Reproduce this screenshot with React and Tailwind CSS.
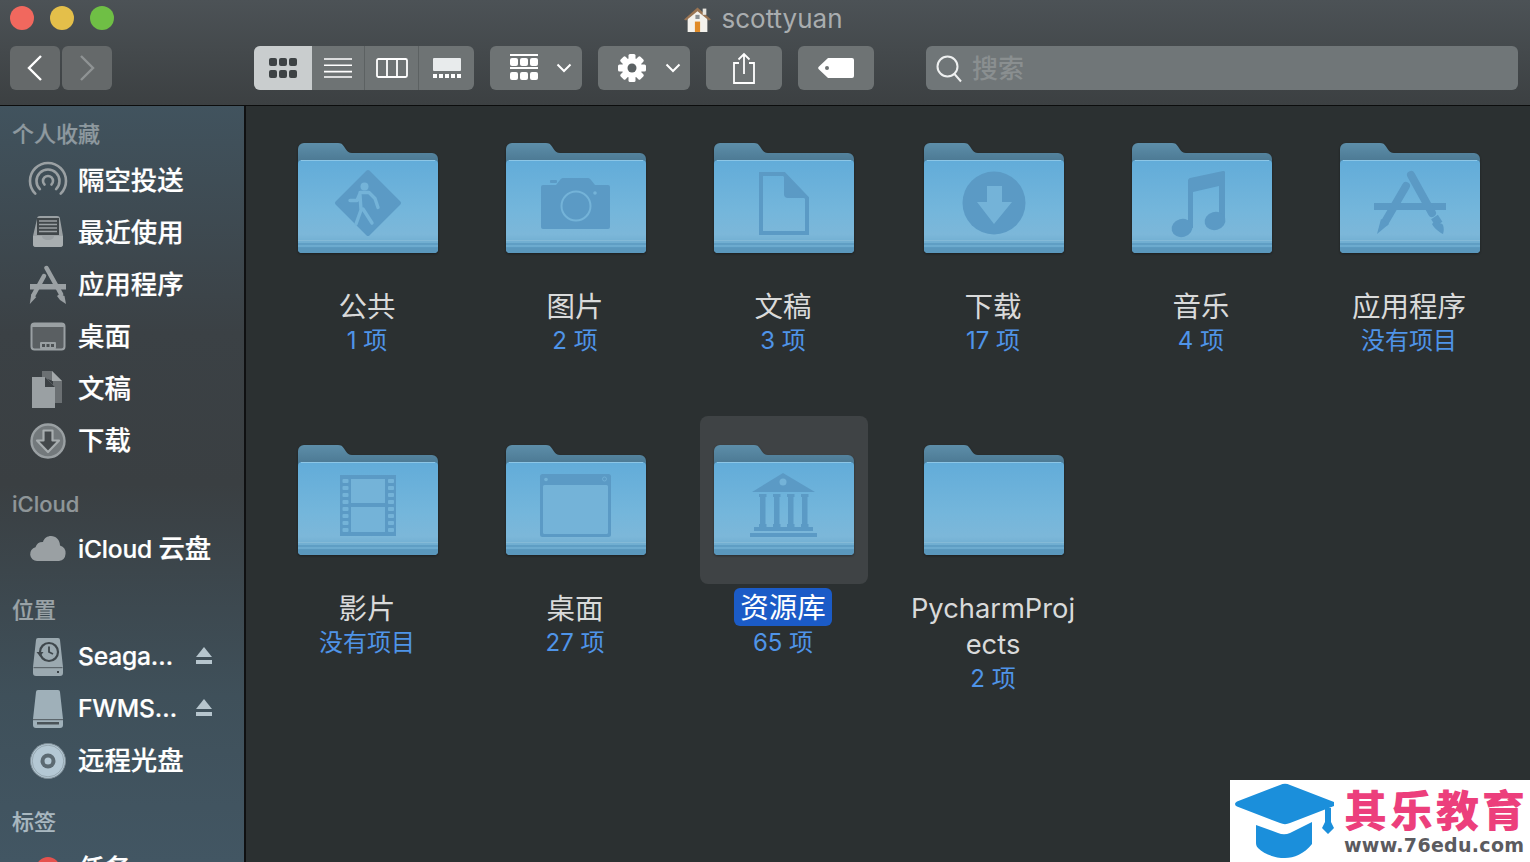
const G = "#5b9ac5";
const L = "#74b3d8";

function Folder({ children }) {
  return (
    <svg width="140" height="112" viewBox="0 0 140 112" className="block drop-shadow-[0_1px_1px_rgba(0,0,0,0.35)]">
      <defs>
        <linearGradient id="fback" x1="0" y1="0" x2="0" y2="1">
          <stop offset="0" stopColor="#5d8ea9" />
          <stop offset="1" stopColor="#436e88" />
        </linearGradient>
        <linearGradient id="ffront" x1="0" y1="0" x2="0" y2="1">
          <stop offset="0" stopColor="#62acd9" />
          <stop offset="0.55" stopColor="#74b6db" />
          <stop offset="0.8" stopColor="#7cb7d9" />
          <stop offset="0.9" stopColor="#6fadd0" />
          <stop offset="1" stopColor="#65a5ca" />
        </linearGradient>
      </defs>
      <path d="M0 6a6 6 0 0 1 6-6h34c3 0 4.500 1 6 3.500l2 3c1.500 2.300 3 3.500 6 3.500h80a6 6 0 0 1 6 6v12H0z" fill="url(#fback)" />
      <path d="M0 21a4 4 0 0 1 4-4h132a4 4 0 0 1 4 4v85a4 4 0 0 1-4 4H4a4 4 0 0 1-4-4z" fill="url(#ffront)" />
      <path d="M3 17.500h134" stroke="#8cc6e6" strokeWidth="1" />
      <rect x="0" y="97" width="140" height="1" fill="#84bad7" />
      <rect x="0" y="100" width="140" height="2" fill="#5f9ec4" />
      <rect x="0" y="104" width="140" height="1" fill="#5b9ac0" />
      <path d="M0 106v0a4 4 0 0 0 4 4h132a4 4 0 0 0 4-4v-1H0z" fill="#5a97bc" />
      {children}
    </svg>
  );
}

const glyphs = {
  public: (
    <g>
      <path d="M70 29 L101 60 L70 91 L39 60 Z" fill={G} stroke={G} strokeWidth="4" strokeLinejoin="round" />
      <circle cx="66.500" cy="43.500" r="4" fill={L} />
      <path d="M62 49.500h9l6 6 3 9M52 57.500h7l3-7M62 52l1 15-5 14M65 66l9 14" fill="none" stroke={L} strokeWidth="3.400" strokeLinecap="round" strokeLinejoin="round" />
    </g>
  ),
  camera: (
    <g>
      <path d="M37 42h13l4-5c1-1.500 2-2 4-2h23c2 0 3 .5 4 2l4 5h13a2 2 0 0 1 2 2v40a2 2 0 0 1-2 2H37a2 2 0 0 1-2-2V44a2 2 0 0 1 2-2z" fill={G} />
      <rect x="44" y="37" width="7" height="3" rx="1" fill={G} />
      <circle cx="70" cy="63" r="14.500" fill="none" stroke={L} strokeWidth="2" />
      <circle cx="89" cy="50" r="1.800" fill={L} />
    </g>
  ),
  doc: (
    <g>
      <path d="M47 31h23l23 24v35H47z" fill="none" stroke={G} strokeWidth="4" />
      <path d="M70 31l23 24H74a4 4 0 0 1-4-4z" fill={G} />
    </g>
  ),
  download: (
    <g>
      <circle cx="70" cy="60" r="31.500" fill={G} />
      <path d="M63 43h15v16h10L70 81 53 59h10z" fill={L} />
    </g>
  ),
  music: (
    <g fill={G}>
      <path d="M56 38c0-1.500 .5-2.500 2-3l33-7c1.500-.3 2 .5 2 1.500V78h-6V43l-26 6v36h-5z" />
      <ellipse cx="50" cy="85" rx="10.500" ry="9" transform="rotate(-15 50 85)" />
      <ellipse cx="83" cy="78" rx="10.500" ry="9" transform="rotate(-15 83 78)" />
    </g>
  ),
  apps: (
    <g>
      <rect x="34" y="60" width="72" height="7" fill={G} />
      <path d="M71 32 L92 70" stroke={G} strokeWidth="8" strokeLinecap="round" />
      <path d="M94.500 74 L99 81" stroke={G} strokeWidth="8" />
      <path d="M95 78c3 2 7 2 8 4 1 3 1 6 0 9-4-2-9-6-11-10z" fill={G} />
      <path d="M66 43 L45 79" stroke={G} strokeWidth="8" strokeLinecap="round" />
      <path d="M41 76l8 5-12 10z" fill={G} />
    </g>
  ),
  movie: (
    <g>
      <rect x="42" y="30" width="56" height="61" fill={G} />
      <rect x="53" y="34" width="34" height="24" fill={L} />
      <rect x="53" y="62" width="34" height="25" fill={L} />
      {[34, 41, 48, 55, 62, 69, 76, 83].map((y) => (
        <g key={y} fill={L}>
          <rect x="44.500" y={y} width="6" height="4" rx="1" />
          <rect x="90" y={y} width="6" height="4" rx="1" />
        </g>
      ))}
    </g>
  ),
  desktop: (
    <g>
      <rect x="34" y="29" width="71" height="63" rx="2.500" fill={G} />
      <rect x="37" y="40" width="65" height="49" rx="1.500" fill={L} />
      <circle cx="40" cy="34.500" r="1.800" fill={L} />
      <circle cx="98.500" cy="34" r="2" fill="none" stroke={L} strokeWidth="0.800" />
    </g>
  ),
  library: (
    <g fill={G}>
      <path d="M69 28 L101 47 H38 Z" />
      <circle cx="69" cy="37" r="3.500" fill={L} />
      {[45, 59, 73, 87].map((x) => (
        <g key={x}>
          <rect x={x} y="49" width="7.500" height="3" />
          <rect x={x + 1} y="52" width="5.500" height="27" />
          <rect x={x} y="79" width="7.500" height="3" />
        </g>
      ))}
      <rect x="40" y="82" width="59" height="4" />
      <rect x="36" y="88" width="67" height="4" />
    </g>
  ),
};

const items = [
  { name: ["公共"], sub: "1 项", g: "public" },
  { name: ["图片"], sub: "2 项", g: "camera" },
  { name: ["文稿"], sub: "3 项", g: "doc" },
  { name: ["下载"], sub: "17 项", g: "download" },
  { name: ["音乐"], sub: "4 项", g: "music" },
  { name: ["应用程序"], sub: "没有项目", g: "apps" },
  { name: ["影片"], sub: "没有项目", g: "movie" },
  { name: ["桌面"], sub: "27 项", g: "desktop" },
  { name: ["资源库"], sub: "65 项", g: "library", selected: true },
  { name: ["PycharmProj", "ects"], sub: "2 项", latin: true },
];

function Item({ it }) {
  return (
    <div className="w-[208px] flex flex-col items-center">
      <div className={"w-[168px] h-[168px] pt-[2px] rounded-[8px] flex items-center justify-center " + (it.selected ? "bg-[#3f4345]" : "")}>
        <Folder>{it.g ? glyphs[it.g] : null}</Folder>
      </div>
      <div className={"mt-[7px] pr-[2px] flex flex-col items-center leading-[36px] text-[#d9dada] " + (it.latin ? "text-[27.3px]" : "text-[28.5px]")}>
        {it.name.map((n) =>
          it.selected ? (
            <span key={n} className="bg-[#1b5bc7] text-white rounded-[6px] px-[6px] h-[38px] leading-[40px] -mt-[3px] mb-[1px]">{n}</span>
          ) : (
            <span key={n}>{n}</span>
          )
        )}
      </div>
      <div className="pr-[2px] text-[24px] leading-[32px] text-[#4f94e8]">{it.sub}</div>
    </div>
  );
}

const I = "#9aa0a3";
const sideIcons = {
  airdrop: (
    <g fill="none" stroke={I} strokeWidth="2.600" strokeLinecap="round">
      <path d="M7.300 32.700A18 18 0 1 1 32.700 32.700" />
      <path d="M11.900 28.100A11.500 11.500 0 1 1 28.100 28.100" />
      <path d="M16.500 23.500A5 5 0 1 1 23.500 23.500" />
    </g>
  ),
  recent: (
    <g>
      <path d="M9 6a3 3 0 0 1 3-3h17a3 3 0 0 1 3 3l3 17v8a3 3 0 0 1-3 3H8a3 3 0 0 1-3-3v-8z" fill={I} />
      <rect x="9" y="5" width="22" height="17" fill="#41474a" />
      <path d="M11 8h18M11 11.500h18M11 15h18M11 18.500h18" stroke={I} strokeWidth="1.600" />
      <path d="M5 23h9c0 2 2 4 6 4s6-2 6-4h9v8a3 3 0 0 1-3 3H8a3 3 0 0 1-3-3z" fill="#a8aeb0" />
    </g>
  ),
  apps: (
    <g fill={I}>
      <rect x="2" y="19" width="36" height="5.500" />
      <path d="M18.500 3 L33 29" stroke={I} strokeWidth="4.500" strokeLinecap="round" />
      <path d="M31.500 29l5 2 1.500 8-6-4-3-4z" />
      <path d="M16 11 L5.500 30" stroke={I} strokeWidth="4.500" strokeLinecap="round" />
      <path d="M3.300 29l5 3-6.500 7z" />
    </g>
  ),
  desktop: (
    <g>
      <rect x="3.500" y="6.500" width="33" height="26" rx="3" fill="#5a5f62" stroke={I} strokeWidth="2" />
      <rect x="4" y="7" width="32" height="3" fill={I} />
      <rect x="12" y="25" width="16" height="7" rx="1" fill={I} />
      <rect x="14" y="27" width="3" height="3" fill="#4b5053" />
      <rect x="18.500" y="27" width="3" height="3" fill="#4b5053" />
      <rect x="23" y="27" width="3" height="3" fill="#4b5053" />
    </g>
  ),
  docs: (
    <g>
      <path d="M14 2h10l10 10v22h-9V12L14 8z" fill="#6b7073" />
      <path d="M24 2l10 10H24z" fill="#a4a9ab" />
      <path d="M4 8h13l10 10v21H4z" fill={I} />
      <path d="M17 8l10 10H17z" fill="#3c4144" />
    </g>
  ),
  download: (
    <g>
      <circle cx="20" cy="20" r="16.500" fill="#73797c" stroke={I} strokeWidth="2.400" />
      <path d="M15.500 9.500h9v10h6.500L20 31 9 19.500h6.500z" fill="#43484b" stroke="#a7adaf" strokeWidth="2.200" strokeLinejoin="round" />
    </g>
  ),
  cloud: (
    <path d="M9 32a7 7 0 0 1-1.500-13.800A7.500 7.500 0 0 1 15 13c1-4 4.500-6 8-6 5 0 9 4 9 9.500A8 8 0 0 1 31 32z" fill={I} />
  ),
  tm: (
    <g>
      <path d="M8 3a2 2 0 0 1 2-2h20a2 2 0 0 1 2 2l3 27v6a3 3 0 0 1-3 3H8a3 3 0 0 1-3-3v-6z" fill="#9ba9b0" />
      <rect x="5.500" y="30" width="29" height="1.200" fill="#5c666c" />
      <rect x="29" y="34" width="2" height="2" fill="#3c4347" />
      <circle cx="21" cy="15" r="9" fill="none" stroke="#3f474c" strokeWidth="2.200" />
      <path d="M21 9.500V15l4 2" fill="none" stroke="#3f474c" strokeWidth="1.800" />
      <path d="M8.500 15h7L12 19.500z" fill="#3f474c" />
    </g>
  ),
  drive: (
    <g>
      <path d="M8 3a2 2 0 0 1 2-2h20a2 2 0 0 1 2 2l3 27v6a3 3 0 0 1-3 3H8a3 3 0 0 1-3-3v-6z" fill="#9fb0b9" />
      <rect x="5" y="30" width="30" height="1.200" fill="#5c666c" />
      <rect x="9" y="33" width="22" height="2.500" fill="#4a5358" />
    </g>
  ),
  disc: (
    <g>
      <circle cx="20" cy="20" r="17.500" fill="#b4c8d4" stroke="#7d8c95" strokeWidth="1" />
      <circle cx="20" cy="20" r="15.800" fill="none" stroke="#8e9ea7" strokeWidth="0.800" />
      <circle cx="20" cy="20" r="7.500" fill="#5c6a72" />
      <circle cx="20" cy="20" r="3.500" fill="#b4c8d4" />
    </g>
  ),
  red: <circle cx="20" cy="20" r="12" fill="#e5524e" />,
};

function Row({ icon, label, eject, latin }) {
  return (
    <div className="h-[52px] flex items-center pl-[28px]">
      <svg width="40" height="40" viewBox="0 0 40 40" className="shrink-0">{sideIcons[icon]}</svg>
      <span className={"ml-[10px] -mt-[1px] font-medium text-white whitespace-nowrap [-webkit-text-stroke:0.2px_white] " + (latin ? "text-[24.6px] tracking-[-0.2px]" : "text-[26.4px]")}>{label}</span>
      {eject ? (
        <svg width="18" height="18" viewBox="0 0 18 18" className="absolute left-[195px] -mt-[2px]">
          <path d="M9 0l8 10H1z" fill="#b6c5cd" />
          <rect x="1" y="13" width="16" height="4" fill="#b6c5cd" />
        </svg>
      ) : null}
    </div>
  );
}

function Label({ className, children }) {
  return <div className={"h-[30px] leading-[30px] pl-[12px] text-[22px] font-medium [-webkit-text-stroke:0.2px_currentColor] " + className}>{children}</div>;
}

function Btn({ className, children }) {
  return <div className={"h-[44px] rounded-[6px] flex items-center justify-center shrink-0 " + className}>{children}</div>;
}

function Chevron() {
  return (
    <svg width="16" height="10" viewBox="0 0 16 10">
      <path d="M1.500 1.500L8 8l6.500-6.500" fill="none" stroke="#fff" strokeWidth="2" />
    </svg>
  );
}

function GroupIcon() {
  return (
    <svg width="28" height="28" viewBox="0 0 28 28">
      <rect x="0" y="0" width="28" height="2" fill="#fff" />
      <rect x="0" y="13" width="28" height="2" fill="#fff" />
      {[0, 10, 20].map((x) => (
        <g key={x} fill="#fff">
          <rect x={x} y="4" width="8" height="8" rx="2" />
          <rect x={x} y="18" width="8" height="8" rx="2" />
        </g>
      ))}
    </svg>
  );
}

function Gear() {
  return (
    <svg width="30" height="30" viewBox="0 0 30 30">
      {[0, 45, 90, 135].map((a) => (
        <rect key={a} x="11.500" y="1" width="7" height="28" rx="1.500" fill="#fff" transform={`rotate(${a} 15 15)`} />
      ))}
      <circle cx="15" cy="15" r="10" fill="#fff" />
      <circle cx="15" cy="15" r="4.500" fill="#5b6163" />
    </svg>
  );
}

export default function App() {
  return (
    <div className="w-[1530px] h-[862px] relative overflow-hidden flex flex-col bg-[#2b3031] font-[Inter,'Noto_Sans_CJK_SC',sans-serif]">
      <header className="h-[106px] shrink-0 border-b border-[#0c0d0d] bg-gradient-to-b from-[#4c5256] to-[#3c4042] flex flex-col">
        <div className="h-[46px] relative flex items-center justify-center">
          <div className="absolute left-[10px] top-[6px] flex gap-[16px]">
            <div className="w-[24px] h-[24px] rounded-full bg-[#f1685e]" />
            <div className="w-[24px] h-[24px] rounded-full bg-[#e4bf4a]" />
            <div className="w-[24px] h-[24px] rounded-full bg-[#6fbf45]" />
          </div>
          <div className="flex items-center gap-[11px] -mt-[8px] ml-[-4px]">
            <svg width="27" height="27" viewBox="0 0 26 26">
              <path d="M3.500 11L13 3l9.500 8v14h-19z" fill="#f3f1ec" />
              <path d="M0 13L13 1.500 26 13l-2 1L13 5 2 14z" fill="#9a7452" />
              <rect x="18" y="2.500" width="3.500" height="6" fill="#e9e6df" />
              <rect x="10.500" y="15" width="5" height="10" fill="#e08a26" />
              <rect x="11" y="8.500" width="4" height="4" fill="#8a8f92" />
            </svg>
            <span className="text-[26px] text-[#a9adaf] leading-[30px]">scottyuan</span>
          </div>
        </div>
        <div className="flex pl-[10px]">
          <Btn className="w-[50px] bg-[#65696a]">
            <svg width="18" height="28" viewBox="0 0 18 28"><path d="M15 2L3 14l12 12" fill="none" stroke="#fff" strokeWidth="2.400" /></svg>
          </Btn>
          <Btn className="w-[50px] ml-[2px] bg-[#65696a]">
            <svg width="18" height="28" viewBox="0 0 18 28"><path d="M3 2l12 12L3 26" fill="none" stroke="#8f9394" strokeWidth="2.400" /></svg>
          </Btn>
          <div className="ml-[142px] w-[220px] h-[44px] rounded-[6px] overflow-hidden flex bg-[#6e7374] shrink-0">
            <div className="w-[58px] bg-[#c9cdce] flex items-center justify-center">
              <svg width="28" height="20" viewBox="0 0 28 20">
                {[0, 10, 20].map((x) => (
                  <g key={x} fill="#3d4244">
                    <rect x={x} y="0" width="8" height="8" rx="2" />
                    <rect x={x} y="12" width="8" height="8" rx="2" />
                  </g>
                ))}
              </svg>
            </div>
            <div className="w-[53px] flex items-center justify-center border-r border-[#5c6162]">
              <svg width="28" height="20" viewBox="0 0 28 20">
                <path d="M0 1h28M0 7.300h28M0 13.600h28M0 19h28" stroke="#fff" strokeWidth="1.600" />
              </svg>
            </div>
            <div className="w-[54px] flex items-center justify-center border-r border-[#5c6162]">
              <svg width="32" height="20" viewBox="0 0 32 20">
                <rect x="1" y="1" width="30" height="18" rx="1.500" fill="none" stroke="#fff" strokeWidth="1.800" />
                <path d="M11 1v18M21 1v18" stroke="#fff" strokeWidth="1.800" />
              </svg>
            </div>
            <div className="flex-1 flex items-center justify-center">
              <svg width="28" height="20" viewBox="0 0 28 20">
                <rect x="0" y="0" width="28" height="13" rx="1" fill="#e8ebec" />
                {[0, 6, 12, 18, 24].map((x) => (
                  <rect key={x} x={x} y="16" width="4" height="4" fill="#fff" />
                ))}
              </svg>
            </div>
          </div>
          <Btn className="w-[92px] ml-[16px] gap-[18px] pl-[10px] bg-[#6e7374]"><GroupIcon /><Chevron /></Btn>
          <Btn className="w-[92px] ml-[16px] gap-[18px] pl-[10px] bg-[#6e7374]"><Gear /><Chevron /></Btn>
          <Btn className="w-[76px] ml-[16px] bg-[#6e7374]">
            <svg width="24" height="32" viewBox="0 0 24 32">
              <path d="M7 11H2v20h20V11h-5" fill="none" stroke="#fff" strokeWidth="1.800" />
              <path d="M12 22V2M6.500 7.500L12 2l5.500 5.500" fill="none" stroke="#fff" strokeWidth="1.800" />
            </svg>
          </Btn>
          <Btn className="w-[76px] ml-[16px] bg-[#6e7374]">
            <svg width="36" height="20" viewBox="0 0 36 20">
              <path d="M10 0h24a2 2 0 0 1 2 2v16a2 2 0 0 1-2 2H10L1 11.500a2 2 0 0 1 0-3z" fill="#fff" />
              <circle cx="9" cy="10" r="2" fill="#6e7374" />
            </svg>
          </Btn>
          <div className="ml-[52px] w-[592px] h-[44px] rounded-[6px] bg-[#707678] flex items-center pl-[10px] shrink-0">
            <svg width="26" height="30" viewBox="0 0 26 30">
              <circle cx="11.500" cy="13.500" r="10" fill="none" stroke="#eef0f0" strokeWidth="2" />
              <path d="M18.500 21l6.500 7.500" stroke="#eef0f0" strokeWidth="2" />
            </svg>
            <span className="ml-[10px] text-[26px] font-medium text-[#8a8f90]">搜索</span>
          </div>
        </div>
      </header>
      <div className="flex-1 flex min-h-0">
        <aside className="relative w-[246px] shrink-0 border-r-2 border-[#0f1011] overflow-hidden bg-[linear-gradient(180deg,#41535e_0%,#3b4145_30%,#3a3f42_50%,#3f505a_78%,#425663_100%)]">
          <Label className="mt-[13px] text-[#8e999f]">个人收藏</Label>
          <div className="mt-[6px]">
            <Row icon="airdrop" label="隔空投送" />
            <Row icon="recent" label="最近使用" />
            <Row icon="apps" label="应用程序" />
            <Row icon="desktop" label="桌面" />
            <Row icon="docs" label="文稿" />
            <Row icon="download" label="下载" />
          </div>
          <Label className="mt-[22px] text-[#8f9699]">iCloud</Label>
          <div className="mt-[4px]">
            <Row icon="cloud" label={<>iCloud <span className="text-[26.4px]">云盘</span></>} latin />
          </div>
          <Label className="mt-[20px] text-[#9aa3a7]">位置</Label>
          <div className="mt-[6px]">
            <Row icon="tm" label="Seaga…" latin eject />
            <Row icon="drive" label="FWMS…" latin eject />
            <Row icon="disc" label="远程光盘" />
          </div>
          <Label className="mt-[20px] text-[#a9b8c0]">标签</Label>
          <div className="mt-[6px]">
            <Row icon="red" label="任务" />
          </div>
        </aside>
        <main className="flex-1 min-w-0 pt-[8px] pl-[18px] grid grid-cols-[208px_208px_210px_208px_208px_208px] auto-rows-[302px] justify-start">
          {items.map((it) => (
            <Item key={it.name[0]} it={it} />
          ))}
        </main>
      </div>
      <div className="absolute right-0 bottom-0 w-[300px] h-[82px] bg-white flex">
        <svg width="110" height="82" viewBox="0 0 110 82" className="shrink-0">
          <path d="M5 24 Q5 22.500 7 21.500 L50 5 a12 12 0 0 1 10 0 L104 22 V26 L60 43 a12 12 0 0 1-10 0 L7 26.500 Q5 25.500 5 24 Z" fill="#1b8fdb" />
          <path d="M26 45 L48 53 a16 16 0 0 0 12 0 L82 42 V64 C74 74 64 78 55 78 C44 78 34 74 28 68 C26 66 26 64 26 62 Z" fill="#1b8fdb" />
          <path d="M95 28h6v14l3 6-6 6-6-6 3-6z" fill="#1b8fdb" />
        </svg>
        <div className="pl-[4px] pt-[2px] flex flex-col">
          <span className="text-[43px] leading-[52px] font-black tracking-[3px] text-[#ec3f7c] whitespace-nowrap font-['Noto_Sans_CJK_SC',sans-serif]">其乐教育</span>
          <span className="-mt-[1px] text-[19px] leading-[24px] font-bold tracking-[0.3px] text-[#5b5b5f] whitespace-nowrap font-['DejaVu_Sans',sans-serif]">www.76edu.com</span>
        </div>
      </div>
    </div>
  );
}
